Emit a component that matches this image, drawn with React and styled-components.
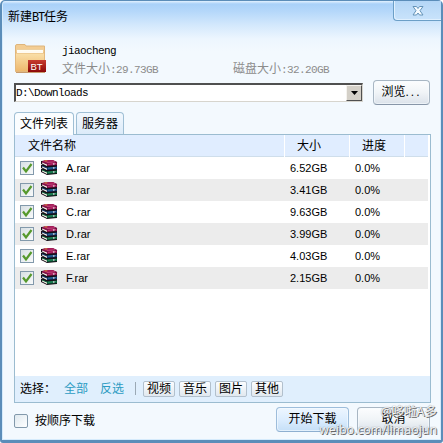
import React from "react";
import styled, { createGlobalStyle } from "styled-components";

const GlobalStyle = createGlobalStyle`
  * { box-sizing: border-box; }
  body { margin: 0; overflow: hidden; }
  button { font: inherit; color: inherit; padding: 0; white-space: nowrap; }
`;

const Dialog = styled.main`
  position: relative;
  width: 443px;
  height: 443px;
  padding: 0 11px 0 12px;
  display: flex;
  flex-direction: column;
  border: solid #5b8db9;
  border-width: 1px 2px 3px;
  border-radius: 5px 5px 3px 3px;
  background: linear-gradient(#e2f1ff 0, #a9d1f9 3px, #b4d7fa 10px, #d3e8fc 24px, #edf6fe 38px, #f3f9fe 50px, #f3f9fe);
  font: 12px/16px "Liberation Sans", "Noto Sans CJK SC", sans-serif;
  color: #000;
  box-shadow: inset 1px 0 #d5ebfc, inset -1px 0 #d5ebfc, inset 0 -1px #d5ebfc;
`;

const TitleBar = styled.header`
  height: 43px;
  flex: none;
  display: flex;
  justify-content: space-between;
  margin: 0 -11px 0 -6px;
`;

const Title = styled.h1`
  margin: 7px 0 0;
  font: 12px/16px "Noto Sans CJK SC", sans-serif;
`;

const Mono = styled.span`
  font-family: "Liberation Mono", monospace;
  font-size: 12px;
  letter-spacing: -1.2px;
`;

const CloseButton = styled.button`
  width: 48px;
  height: 20px;
  border: 1px solid #6c9fc7;
  border-width: 0 0 1px 1px;
  border-radius: 0 0 0 4px;
  background: linear-gradient(#b4d6f6, #c9e3fb);
  box-shadow: inset 1px -1px #e0f0fe;
  display: flex;
  align-items: center;
  justify-content: center;
`;

const Summary = styled.section`
  height: 36px;
  flex: none;
  display: flex;
`;

const Details = styled.div`
  margin-left: 16px;
  font: 11px/14px "Liberation Mono", "Noto Sans CJK SC", monospace;
  letter-spacing: -0.6px;
`;

const TorrentName = styled.div`
  line-height: 14px;
  height: 16px;
`;

const Sizes = styled.div`
  display: flex;
  color: #8c8c8c;
  line-height: 15px;
`;

const SizeItem = styled.div`
  width: 171px;
  white-space: nowrap;
`;

const Cjk = styled.span`
  font: 12px/15px "Noto Sans CJK SC", sans-serif;
  letter-spacing: 0;
`;

const PathRow = styled.div`
  display: flex;
  height: 32px;
  flex: none;
  align-items: flex-start;
  justify-content: space-between;
`;

const Combo = styled.div`
  width: 349px;
  height: 19px;
  margin-top: 3px;
  border: 1px solid #d7d5ce;
  border-top: 2px solid #505050;
  border-left: 2px solid #505050;
  background: #fff;
  display: flex;
  justify-content: space-between;
  font: 11px/16px "Liberation Mono", monospace;
  letter-spacing: -0.6px;
`;

const PathText = styled.span`
  line-height: 17px;
`;

const DropButton = styled.button`
  width: 16px;
  height: 16px;
  background: #d4d0c8;
  border: 1px solid;
  border-color: #f5f3ef #505050 #505050 #f5f3ef;
  display: flex;
  align-items: center;
  justify-content: center;
`;

const PushButton = styled.button`
  width: ${(p) => p.$width}px;
  height: 25px;
  flex: none;
  border: 1px solid ${(p) => (p.$primary ? "#9dbddb" : "#a8b6c3")};
  border-bottom-color: ${(p) => (p.$primary ? "#8eafd0" : "#8796a8")};
  border-radius: 4px;
  background: ${(p) => p.$primary
    ? "linear-gradient(#edf6ff, #dcedfe 50%, #c5dff7)"
    : "linear-gradient(#fcfdfe, #f0f4f7 50%, #dbe2ea)"};
  box-shadow: inset 0 0 0 1px #f7fbff99;
  line-height: 21px;
`;

const Dots = styled.span`
  letter-spacing: 2px;
`;

const Tabs = styled.nav`
  display: flex;
  gap: 2px;
  height: 22px;
  flex: none;
`;

const Tab = styled.button`
  width: ${(p) => p.$width}px;
  height: ${(p) => (p.$active ? 23 : 22)}px;
  border: 1px solid #9fbfd5;
  border-bottom: 0;
  border-radius: 4px 4px 0 0;
  background: ${(p) => (p.$active ? "#fafdff" : "linear-gradient(#f2f8fe, #dcebf9)")};
  position: relative;
  line-height: 22px;
`;

const Panel = styled.section`
  width: 417px;
  height: 269px;
  flex: none;
  border: 1px solid #9bbcd0;
  background: #fff;
  display: flex;
  flex-direction: column;
`;

const gridColumns = "270px 65px 55px 1fr";

const TableHead = styled.div`
  display: grid;
  grid-template-columns: ${gridColumns};
  height: 22px;
  margin-right: 2px;
  flex: none;
  background: #e0edff;
  border-bottom: 1px solid #cfdeeb;
  line-height: 23px;
`;

const HeadCell = styled.div`
  padding-left: ${(p) => p.$indent ?? 12}px;
  border-right: 1px solid #fff;
  &:last-child { border: 0; }
`;

const Row = styled.div`
  display: grid;
  grid-template-columns: ${gridColumns};
  height: 22px;
  margin-right: 2px;
  align-items: center;
  background: ${(p) => (p.$shaded ? "#ececec" : "#fff")};
  font: 11px/22px "Liberation Sans", sans-serif;
`;

const FileCell = styled.div`
  display: flex;
  align-items: center;
  padding: 0 0 1px 5px;
  height: 22px;
`;

const Check = styled.span`
  width: 14px;
  height: 14px;
  border: 1px solid #8299ab;
  border-radius: ${(p) => (p.$checked ? 0 : 2)}px;
  background: ${(p) => (p.$checked
    ? "linear-gradient(135deg, #d8e0e4, #f9fafa)"
    : "linear-gradient(135deg, #dfe9ef, #fff)")};
  display: flex;
  align-items: center;
  justify-content: center;
`;

const IconSlot = styled.span`
  display: flex;
  margin-left: 7px;
`;

const FileName = styled.span`
  margin-left: 8px;
`;

const Value = styled.span`
  padding-left: 5px;
`;

const Filters = styled.div`
  margin-top: auto;
  height: 26px;
  background: #e0effd;
  display: flex;
  align-items: center;
  padding: 0 0 1px 5px;
`;

const FilterLabel = styled.span`
  width: 44px;
  white-space: nowrap;
`;

const FilterLink = styled.a`
  width: 36px;
  color: #2c9bc2;
`;

const Divider = styled.span`
  width: 1px;
  height: 13px;
  margin: 0 7px 0 -1px;
  background: #9ba9b5;
`;

const FilterButton = styled.button`
  width: 32px;
  height: 16px;
  margin-right: 4px;
  border: 1px solid #b2c0cd;
  border-radius: 2px;
  background: linear-gradient(#fbfdff, #e1e8ef);
  line-height: 14px;
`;

const Footer = styled.footer`
  display: flex;
  align-items: flex-start;
  padding-top: 4px;
`;

const OrderOption = styled.label`
  display: flex;
  align-items: center;
  gap: 7px;
  width: 262px;
  margin-top: 6px;
`;

const Actions = styled.div`
  display: flex;
  gap: 8px;
`;

const Watermark = styled.div`
  position: absolute;
  right: 4px;
  bottom: 2px;
  text-align: right;
  color: #f4f6f8;
  font-family: "Open Sans", "Noto Sans CJK SC", sans-serif;
  text-shadow: 1px 1px 0 #666, 0 0 1px #777;
  white-space: nowrap;
  pointer-events: none;
`;

const WatermarkName = styled.div`
  font-size: 12.5px;
  line-height: 18px;
`;

const WatermarkUrl = styled.div`
  font-size: 12.4px;
  line-height: 17px;
`;

function FolderIcon() {
  return (
    <svg width="32" height="30" viewBox="0 0 32 30">
      <defs>
        <linearGradient id="folder" x2="0" y2="1">
          <stop stopColor="#fae0aa" /><stop offset="1" stopColor="#edb76c" />
        </linearGradient>
        <linearGradient id="badge" x2="0" y2="1">
          <stop stopColor="#c73c30" /><stop offset="1" stopColor="#8d0909" />
        </linearGradient>
      </defs>
      <path d="M1.500 27V2q0-1.500 1.500-1.500h8L12 2h18.500v25z" fill="#f3cd93" stroke="#deb57c" />
      <path d="M3 5h26v4H3z" fill="#fffdf5" />
      <path d="M3 5.500h26" stroke="#ecd0a0" />
      <path d="M1.500 9h29v18.500h-29z" fill="url(#folder)" stroke="#e3b87d" />
      <path d="M3 7h26v2H3z" fill="#fffaf0" />
      <path d="M2 28.500h29" stroke="#c79c6e" />
      <path d="M14 16h18v12H14z" fill="url(#badge)" />
      <text x="16.500" y="25.500" fill="#fff" fontSize="9.500" fontFamily="Liberation Sans, sans-serif">BT</text>
    </svg>
  );
}

function CloseIcon() {
  return (
    <svg width="12" height="12" viewBox="0 0 12 12">
      <path d="M1 1.500h3.500L6 3.500l1.500-2H11L8 5.700l3 4.300H7.500L6 8l-1.500 2H1l3-4.300z" fill="#f6fbff" stroke="#6493b8" />
    </svg>
  );
}

function Tick() {
  return (
    <svg width="12" height="12" viewBox="0 0 12 12">
      <path d="M2 5.500l3 4L10.500 2" fill="none" stroke="#56992c" strokeWidth="2.200" />
    </svg>
  );
}

const books = [
  { y: 9, color: "#2c9366", dark: "#086038" },
  { y: 5, color: "#3477a6", dark: "#103b70" },
  { y: 1, color: "#cf3b7c", dark: "#8b104b" },
];

function ArchiveIcon() {
  return (
    <svg width="17" height="16" viewBox="0 0 17 16">
      {books.map((b) => (
        <g key={b.y} transform={`translate(0 ${b.y})`}>
          <path d="M0 0L11-1L16 1V5L6 6L0 3z" fill="#171019" />
          <path d="M1 1L6 3V5L1 2.500z" fill="#f6efe6" />
          <path d="M1 .5L6 2.500V3.500L1 1.500z" fill={b.dark} />
          <path d="M6 2.500L16 1.500V4L6 5z" fill={b.dark} />
          <path d="M7 3.300L15 2.500" stroke={b.color} />
          <path d="M12 2h1.500v2H12z" fill="#ddd0d8" opacity=".7" />
        </g>
      ))}
      <path d="M1 1.500L4 0h8l4.500 2.300L6.500 3.500z" fill="#a51b59" />
      <path d="M3 1l2-.7 2 .7-2 .6z" fill="#dca236" />
      <path d="M6 2.500l8-.6" stroke="#d25b8d" strokeWidth=".6" />
    </svg>
  );
}

const files = [
  ["A.rar", "6.52GB"],
  ["B.rar", "3.41GB"],
  ["C.rar", "9.63GB"],
  ["D.rar", "3.99GB"],
  ["E.rar", "4.03GB"],
  ["F.rar", "2.15GB"],
];

export default function App() {
  return (
    <>
      <GlobalStyle />
      <Dialog>
        <TitleBar>
          <Title>新建<Mono>BT</Mono>任务</Title>
          <CloseButton aria-label="关闭"><CloseIcon /></CloseButton>
        </TitleBar>
        <Summary>
          <FolderIcon />
          <Details>
            <TorrentName>jiaocheng</TorrentName>
            <Sizes>
              <SizeItem><Cjk>文件大小</Cjk>:29.73GB</SizeItem>
              <SizeItem><Cjk>磁盘大小</Cjk>:32.20GB</SizeItem>
            </Sizes>
          </Details>
        </Summary>
        <PathRow>
          <Combo>
            <PathText>D:\Downloads</PathText>
            <DropButton aria-label="选择目录">
              <svg width="7" height="4"><path d="M0 0h7L3.500 4z" /></svg>
            </DropButton>
          </Combo>
          <PushButton $width={57}>浏览<Dots>...</Dots></PushButton>
        </PathRow>
        <Tabs>
          <Tab $width={60} $active>文件列表</Tab>
          <Tab $width={48}>服务器</Tab>
        </Tabs>
        <Panel>
          <TableHead>
            <HeadCell $indent={13}>文件名称</HeadCell>
            <HeadCell>大小</HeadCell>
            <HeadCell>进度</HeadCell>
            <HeadCell />
          </TableHead>
          {files.map(([name, size], i) => (
            <Row key={name} $shaded={i % 2 === 1}>
              <FileCell>
                <Check $checked><Tick /></Check>
                <IconSlot><ArchiveIcon /></IconSlot>
                <FileName>{name}</FileName>
              </FileCell>
              <Value>{size}</Value>
              <Value>0.0%</Value>
            </Row>
          ))}
          <Filters>
            <FilterLabel>选择：</FilterLabel>
            <FilterLink>全部</FilterLink>
            <FilterLink>反选</FilterLink>
            <Divider />
            {["视频", "音乐", "图片", "其他"].map((t) => <FilterButton key={t}>{t}</FilterButton>)}
          </Filters>
        </Panel>
        <Footer>
          <OrderOption><Check />按顺序下载</OrderOption>
          <Actions>
            <PushButton $width={73} $primary>开始下载</PushButton>
            <PushButton $width={73}>取消</PushButton>
          </Actions>
        </Footer>
        <Watermark>
          <WatermarkName>@哆啦A多</WatermarkName>
          <WatermarkUrl>weibo.com/limaojun</WatermarkUrl>
        </Watermark>
      </Dialog>
    </>
  );
}
